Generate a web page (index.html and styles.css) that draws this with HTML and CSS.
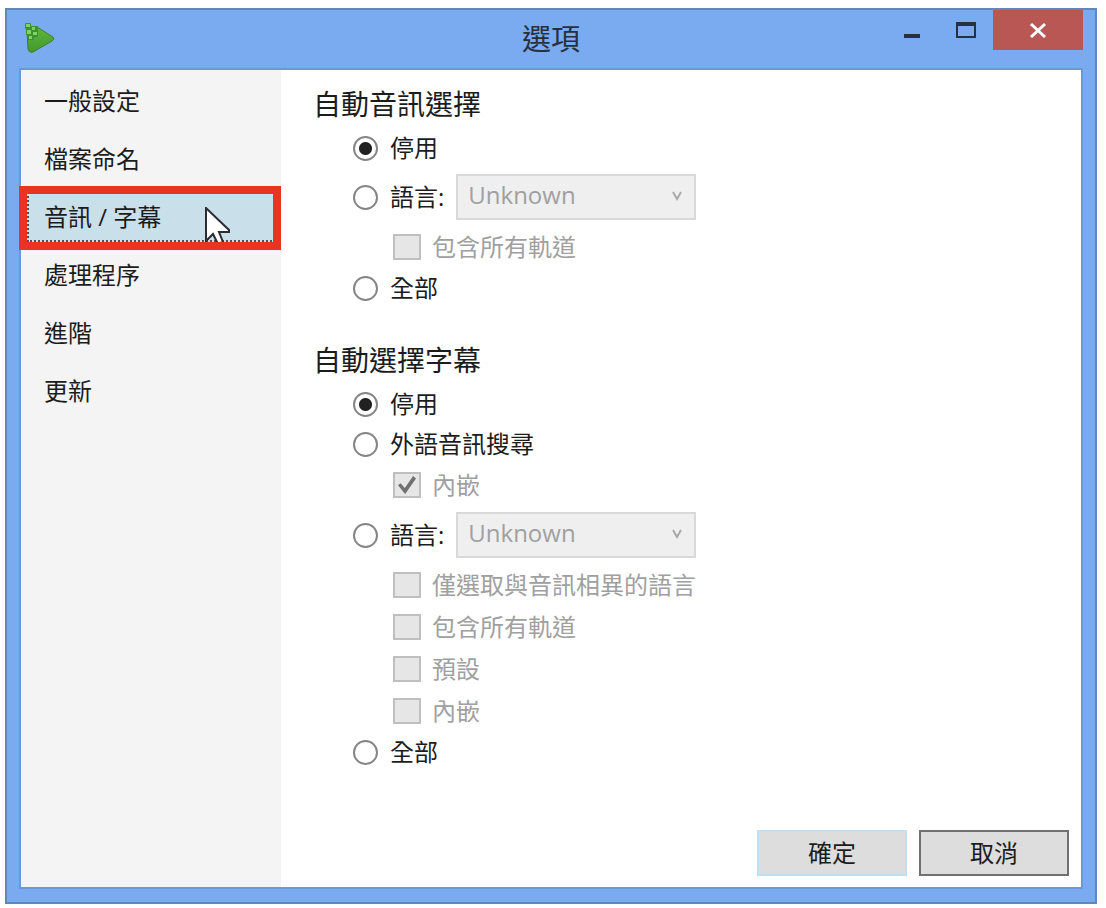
FILE: index.html
```html
<!DOCTYPE html>
<html lang="zh-Hant">
<head>
    <meta charset="UTF-8">
    <meta name="viewport" content="width=device-width, initial-scale=1.0">
    <title>選項</title>
    <link rel="stylesheet" href="styles.css">
</head>
<body>
    <div class="window">
        <header class="titlebar">
            <svg class="app-icon" viewBox="0 0 32 32" aria-hidden="true">
                <defs>
                    <linearGradient id="leaf" x1="0" y1="0" x2="0" y2="1">
                        <stop offset="0" stop-color="#5fb63f"/>
                        <stop offset="1" stop-color="#44992a"/>
                    </linearGradient>
                </defs>
                <path d="M3 9 L13 5 L29 15 Q31 17 28 19 L9 30 Q5 31 4 27 Z" fill="url(#leaf)" stroke="#3a7f2c"/>
                <g fill="#3f8f33">
                    <rect x="1" y="1" width="6" height="6" rx="1"/>
                    <rect x="2" y="7" width="6" height="6"/>
                    <rect x="7" y="4" width="7" height="11" rx="1"/>
                    <rect x="4" y="12" width="6" height="6" rx="1"/>
                </g>
                <g fill="#7fd460">
                    <rect x="2" y="2" width="4" height="3"/>
                    <rect x="3" y="8" width="4" height="4"/>
                    <rect x="8" y="5" width="3" height="3"/>
                    <rect x="9" y="10" width="4" height="3"/>
                    <rect x="5" y="14" width="3" height="3"/>
                </g>
            </svg>
            <h1>選項</h1>
            <div class="window-buttons">
                <button class="win-btn" aria-label="最小化">
                    <svg width="20" height="20" viewBox="0 0 20 20"><rect x="2" y="14" width="16" height="4" fill="#25313f"/></svg>
                </button>
                <button class="win-btn" aria-label="最大化">
                    <svg width="20" height="20" viewBox="0 0 20 20"><path d="M0 2h20v16H0z M2 6v10h16V6z" fill="#25313f" fill-rule="evenodd"/></svg>
                </button>
                <button class="win-btn close" aria-label="關閉">
                    <svg width="20" height="20" viewBox="0 0 20 20"><path d="M3 4L17 17M17 4L3 17" stroke="#fff" stroke-width="3"/></svg>
                </button>
            </div>
        </header>

        <div class="client">
            <nav class="sidebar">
                <a href="#general">一般設定</a>
                <a href="#naming">檔案命名</a>
                <a href="#audio" class="active">音訊 / 字幕
                    <svg class="cursor" width="26" height="38" viewBox="0 0 26 38" aria-hidden="true">
                        <path d="M1 1 V34 L8 27 L13 37 L18 35 L14 25 H24 V23 Z" fill="#fff" stroke="#2b2b33" stroke-width="2"/>
                    </svg>
                </a>
                <a href="#process">處理程序</a>
                <a href="#advanced">進階</a>
                <a href="#update">更新</a>
            </nav>

            <main class="content">
                <section>
                    <h2>自動音訊選擇</h2>
                    <div class="row">
                        <input type="radio" name="audio" id="audioOff" checked>
                        <label for="audioOff">停用</label>
                    </div>
                    <div class="row lang">
                        <input type="radio" name="audio" id="audioLang">
                        <label for="audioLang">語言:</label>
                        <div class="select">
                            <select aria-label="音訊語言" disabled><option>Unknown</option></select>
                            <svg width="12" height="10" viewBox="0 0 12 10"><path d="M2 1L6 8L10 1" fill="none" stroke="#a9a9a9" stroke-width="2"/></svg>
                        </div>
                    </div>
                    <div class="row sub">
                        <input type="checkbox" id="audioTracks" disabled>
                        <label for="audioTracks">包含所有軌道</label>
                    </div>
                    <div class="row">
                        <input type="radio" name="audio" id="audioAll">
                        <label for="audioAll">全部</label>
                    </div>
                </section>

                <section>
                    <h2>自動選擇字幕</h2>
                    <div class="row">
                        <input type="radio" name="subtitle" id="subOff" checked>
                        <label for="subOff">停用</label>
                    </div>
                    <div class="row">
                        <input type="radio" name="subtitle" id="subForeign">
                        <label for="subForeign">外語音訊搜尋</label>
                    </div>
                    <div class="row sub">
                        <input type="checkbox" id="foreignBurn" checked disabled>
                        <label for="foreignBurn">內嵌</label>
                    </div>
                    <div class="row lang">
                        <input type="radio" name="subtitle" id="subLang">
                        <label for="subLang">語言:</label>
                        <div class="select">
                            <select aria-label="字幕語言" disabled><option>Unknown</option></select>
                            <svg width="12" height="10" viewBox="0 0 12 10"><path d="M2 1L6 8L10 1" fill="none" stroke="#a9a9a9" stroke-width="2"/></svg>
                        </div>
                    </div>
                    <div class="row sub">
                        <input type="checkbox" id="subDifferent" disabled>
                        <label for="subDifferent">僅選取與音訊相異的語言</label>
                    </div>
                    <div class="row sub">
                        <input type="checkbox" id="subTracks" disabled>
                        <label for="subTracks">包含所有軌道</label>
                    </div>
                    <div class="row sub">
                        <input type="checkbox" id="subDefault" disabled>
                        <label for="subDefault">預設</label>
                    </div>
                    <div class="row sub">
                        <input type="checkbox" id="subBurn" disabled>
                        <label for="subBurn">內嵌</label>
                    </div>
                    <div class="row">
                        <input type="radio" name="subtitle" id="subAll">
                        <label for="subAll">全部</label>
                    </div>
                </section>

                <footer class="actions">
                    <button class="btn ok">確定</button>
                    <button class="btn">取消</button>
                </footer>
            </main>
        </div>
    </div>
</body>
</html>
```
FILE: styles.css
```css
* {
    box-sizing: border-box;
}
body {
    margin: 0;
    padding: 8px 9px 4px 5px;
    min-height: 100vh;
    display: flex;
    background-color: #fff;
    color: #1c1c1c;
    font-family: "Open Sans", "Noto Sans CJK TC", sans-serif;
    font-size: 24px;
    line-height: 32px;
}
.window {
    flex: 1;
    display: flex;
    flex-direction: column;
    padding: 0 12px 13px;
    border: 2px solid #6187bd;
    background-color: #7aaaf0;
}

/* title bar */
.titlebar {
    display: grid;
    grid-template-columns: 1fr auto 1fr;
    height: 58px;
}
.app-icon {
    width: 32px;
    height: 32px;
    margin: 12px 0 0 5px;
}
h1 {
    margin: 0;
    align-self: center;
    font-size: 29px;
    font-weight: normal;
    line-height: 40px;
    color: #25313f;
}
.window-buttons {
    display: flex;
    justify-content: flex-end;
    align-items: flex-start;
}
.win-btn {
    display: flex;
    align-items: center;
    justify-content: center;
    width: 54px;
    height: 40px;
    padding: 0;
    border: none;
    background: none;
}
.win-btn.close {
    width: 90px;
    background-color: #b95754;
}

/* client area */
.client {
    flex: 1;
    display: flex;
    border: 2px solid #6c97d8;
    background-color: #fff;
}
.sidebar {
    width: 260px;
    padding-top: 2px;
    background-color: #f4f4f4;
}
.sidebar a {
    display: block;
    position: relative;
    height: 58px;
    padding: 13px 23px;
    color: #1c1c1c;
    text-decoration: none;
}
.sidebar a.active {
    background-color: #c9e0eb;
}
.sidebar a.active::before {
    content: "";
    position: absolute;
    inset: 4px 6px;
    border: 2px dotted #4a555b;
    border-width: 0 0 2px 2px;
}
.sidebar a.active::after {
    content: "";
    position: absolute;
    inset: -2px 0 -4px -2px;
    border: 8px solid #e93323;
}
.cursor {
    position: absolute;
    left: 184px;
    top: 19px;
}

.content {
    flex: 1;
    display: flex;
    flex-direction: column;
    padding: 14px 12px 11px 32px;
}
section {
    margin-bottom: 32px;
}
h2 {
    margin: 0 0 4px;
    font-size: 28px;
    font-weight: normal;
    line-height: 40px;
}
.row {
    display: flex;
    align-items: center;
    gap: 12px;
    height: 40px;
    padding-left: 40px;
}
.row.lang {
    height: 58px;
}
.row.sub {
    height: 42px;
    padding-left: 80px;
    gap: 11px;
    color: #a0a0a0;
}

input[type="radio"] {
    appearance: none;
    width: 25px;
    height: 25px;
    margin: 0;
    border: 2px solid #858585;
    border-radius: 50%;
    background-color: #fff;
}
input[type="radio"]:checked {
    background: radial-gradient(circle, #212121 6px, #fff 7px);
}
input[type="checkbox"] {
    appearance: none;
    width: 28px;
    height: 26px;
    margin: 0;
    border: 2px solid #bfbfbf;
    background-color: #e6e6e6;
}
input[type="checkbox"]:checked::before {
    content: "";
    display: block;
    width: 18px;
    height: 18px;
    margin: 2px 3px;
    background-color: #707070;
    clip-path: polygon(0 52%, 14% 40%, 38% 66%, 84% 0, 100% 14%, 40% 100%);
}

.select {
    position: relative;
    width: 240px;
}
.select select {
    appearance: none;
    display: block;
    width: 100%;
    height: 46px;
    padding: 0 12px 4px 10px;
    border: 2px solid #d9d9d9;
    border-radius: 0;
    background-color: #efefef;
    color: #a0a0a0;
    font: inherit;
    opacity: 1;
}
.select svg {
    position: absolute;
    right: 13px;
    top: 17px;
}

.actions {
    display: flex;
    justify-content: flex-end;
    gap: 12px;
    margin-top: auto;
}
.btn {
    width: 150px;
    height: 46px;
    padding: 0;
    border: 2px solid #707070;
    background-color: #ddd;
    color: #1c1c1c;
    font: inherit;
}
.btn.ok {
    border-color: #bee0f3;
}
```
